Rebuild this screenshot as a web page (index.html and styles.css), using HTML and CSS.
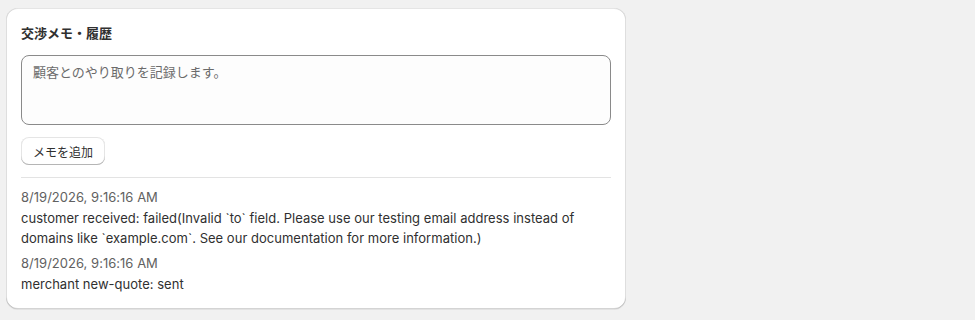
FILE: index.html
```html
<!DOCTYPE html>
<html lang="ja">
<head>
<meta charset="utf-8">
<link rel="stylesheet" href="styles.css">
</head>
<body>
<div class="card">
  <h2 class="title">交渉メモ・履歴</h2>
  <textarea class="memo" placeholder="顧客とのやり取りを記録します。"></textarea>
  <div class="actions"><button class="btn">メモを追加</button></div>
  <hr class="divider">
  <div class="history">
    <div class="entry">
      <div class="date">8/19/2026, 9:16:16 AM</div>
      <div class="text">customer received: failed(Invalid `to` field. Please use our testing email address instead of domains like `example.com`. See our documentation for more information.)</div>
    </div>
    <div class="entry">
      <div class="date">8/19/2026, 9:16:16 AM</div>
      <div class="text">merchant new-quote: sent</div>
    </div>
  </div>
</div>
</body>
</html>
```
FILE: styles.css
```css
html, body {
  margin: 0;
  padding: 0;
  background: #f1f1f1;
}
body {
  padding: 8px 6px;
  font-family: Inter, "Noto Sans CJK JP", sans-serif;
  font-size: 13px;
  color: #303030;
}
.card {
  width: 620px;
  box-sizing: border-box;
  background: #fff;
  border-radius: 12px;
  padding: 15px 15px 15px 15px;
  box-shadow: 0 1px 0 0 rgba(26,26,26,0.07), 0 1px 0 0 rgba(204,204,204,0.5) inset, 0 -1px 0 0 rgba(0,0,0,0.17) inset, -1px 0 0 0 rgba(0,0,0,0.13) inset, 1px 0 0 0 rgba(0,0,0,0.13) inset;
  display: flex;
  flex-direction: column;
}
.title {
  margin: 0 0 12px;
  font-size: 13px;
  font-weight: 650;
  line-height: 20px;
  color: #303030;
}
.memo {
  display: block;
  height: 70px;
  box-sizing: border-box;
  width: 100%;
  border: 1px solid #8a8a8a;
  border-radius: 8px;
  background: #fdfdfd;
  padding: 6px 11px;
  font-family: Inter, "Noto Sans CJK JP", sans-serif;
  font-size: 13px;
  line-height: 20px;
  resize: none;
  color: #303030;
}
.memo::placeholder {
  color: #6b6b6b;
}
.actions {
  margin-top: 12px;
  display: flex;
}
.btn {
  height: 28px;
  padding: 0 12px;
  border: none;
  border-radius: 8px;
  background: #fff;
  font-family: Inter, "Noto Sans CJK JP", sans-serif;
  font-size: 12px;
  font-weight: 400;
  color: #303030;
  box-shadow: 0 -1px 0 0 #b5b5b5 inset, 0 0 0 1px rgba(0,0,0,0.1) inset, 0 0.5px 0 1.5px #fff inset;
}
.divider {
  margin: 12px 0 9px;
  border: none;
  border-top: 1px solid #e3e3e3;
  height: 0;
}
.history {
  display: flex;
  flex-direction: column;
  gap: 5px;
}
.entry {
  display: flex;
  flex-direction: column;
  gap: 1px;
}
.date {
  line-height: 20px;
  color: #616161;
  letter-spacing: 0.02px;
}
.text {
  line-height: 20px;
  color: #303030;
  letter-spacing: 0.02px;
}
```
